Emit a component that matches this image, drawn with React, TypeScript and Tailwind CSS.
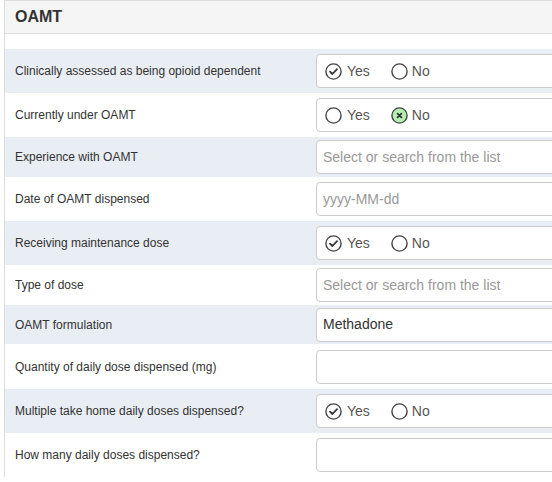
import React from "react";

type Row =
  | { label: string; kind: "radio"; value: "yes" | "no"; h: string }
  | { label: string; kind: "text"; value?: string; placeholder?: string; h: string };

const rows: Row[] = [
  { label: "Clinically assessed as being opioid dependent", kind: "radio", value: "yes", h: "h-[44px]" },
  { label: "Currently under OAMT", kind: "radio", value: "no", h: "h-[44px]" },
  { label: "Experience with OAMT", kind: "text", placeholder: "Select or search from the list", h: "h-[40px]" },
  { label: "Date of OAMT dispensed", kind: "text", placeholder: "yyyy-MM-dd", h: "h-[44px]" },
  { label: "Receiving maintenance dose", kind: "radio", value: "yes", h: "h-[44px]" },
  { label: "Type of dose", kind: "text", placeholder: "Select or search from the list", h: "h-[40px]" },
  { label: "OAMT formulation", kind: "text", value: "Methadone", h: "h-[39px]" },
  { label: "Quantity of daily dose dispensed (mg)", kind: "text", h: "h-[45px]" },
  { label: "Multiple take home daily doses dispensed?", kind: "radio", value: "yes", h: "h-[44px]" },
  { label: "How many daily doses dispensed?", kind: "text", h: "h-[44px]" },
];

function RadioIcon({ state }: { state: "off" | "check" | "cross" }) {
  return (
    <svg width="17" height="17" viewBox="0 0 17 17" className="shrink-0">
      <circle
        cx="8.5"
        cy="8.5"
        r="7.6"
        fill={state === "cross" ? "#b5f0b0" : "#fff"}
        stroke="#444"
        strokeWidth="1.4"
      />
      {state === "check" && (
        <path d="M5 8.6l2.4 2.4 4.6-4.8" fill="none" stroke="#333" strokeWidth="1.8" strokeLinecap="round" strokeLinejoin="round" />
      )}
      {state === "cross" && (
        <path d="M6.6 6.6l3.8 3.8M10.4 6.6l-3.8 3.8" fill="none" stroke="#333" strokeWidth="1.8" strokeLinecap="round" />
      )}
    </svg>
  );
}

function RadioField({ value }: { value: "yes" | "no" }) {
  return (
    <div className="flex h-[34px] w-[280px] items-center rounded border border-[#ccc] bg-white pl-[8px] text-[14px] text-[#555]">
      <span className="flex items-center gap-[5px]">
        <RadioIcon state={value === "yes" ? "check" : "off"} />
        Yes
      </span>
      <span className="ml-[21px] flex items-center gap-[4px]">
        <RadioIcon state={value === "no" ? "cross" : "off"} />
        No
      </span>
    </div>
  );
}

function TextField({ value, placeholder }: { value?: string; placeholder?: string }) {
  return (
    <div className="flex h-[34px] w-[280px] items-center rounded border border-[#ccc] bg-white px-[6px] text-[14px]">
      {value ? <span className="text-[#333]">{value}</span> : <span className="text-[#999]">{placeholder}</span>}
    </div>
  );
}

export default function App() {
  return (
    <div className="h-[482px] w-full overflow-hidden bg-white" style={{ fontFamily: '"Liberation Sans", Arial, sans-serif' }}>
      <div className="ml-[4px] w-[620px] border-l border-t border-[#ddd]">
        <div className="flex h-[33px] items-center border-b border-[#ddd] bg-[#f5f5f5] pl-[10px] text-[16px] font-bold text-[#333]">
          OAMT
        </div>
        <div className="pt-[15px]">
          {rows.map((row, i) => (
            <div
              key={row.label}
              className={`flex ${row.h} items-center ${i % 2 === 0 ? "bg-[#e9edf4]" : "bg-white"}`}
            >
              <div className="w-[311px] pl-[10px] text-[12px] text-[#333]">{row.label}</div>
              {row.kind === "radio" ? (
                <RadioField value={row.value} />
              ) : (
                <TextField value={row.value} placeholder={row.placeholder} />
              )}
            </div>
          ))}
        </div>
      </div>
    </div>
  );
}
